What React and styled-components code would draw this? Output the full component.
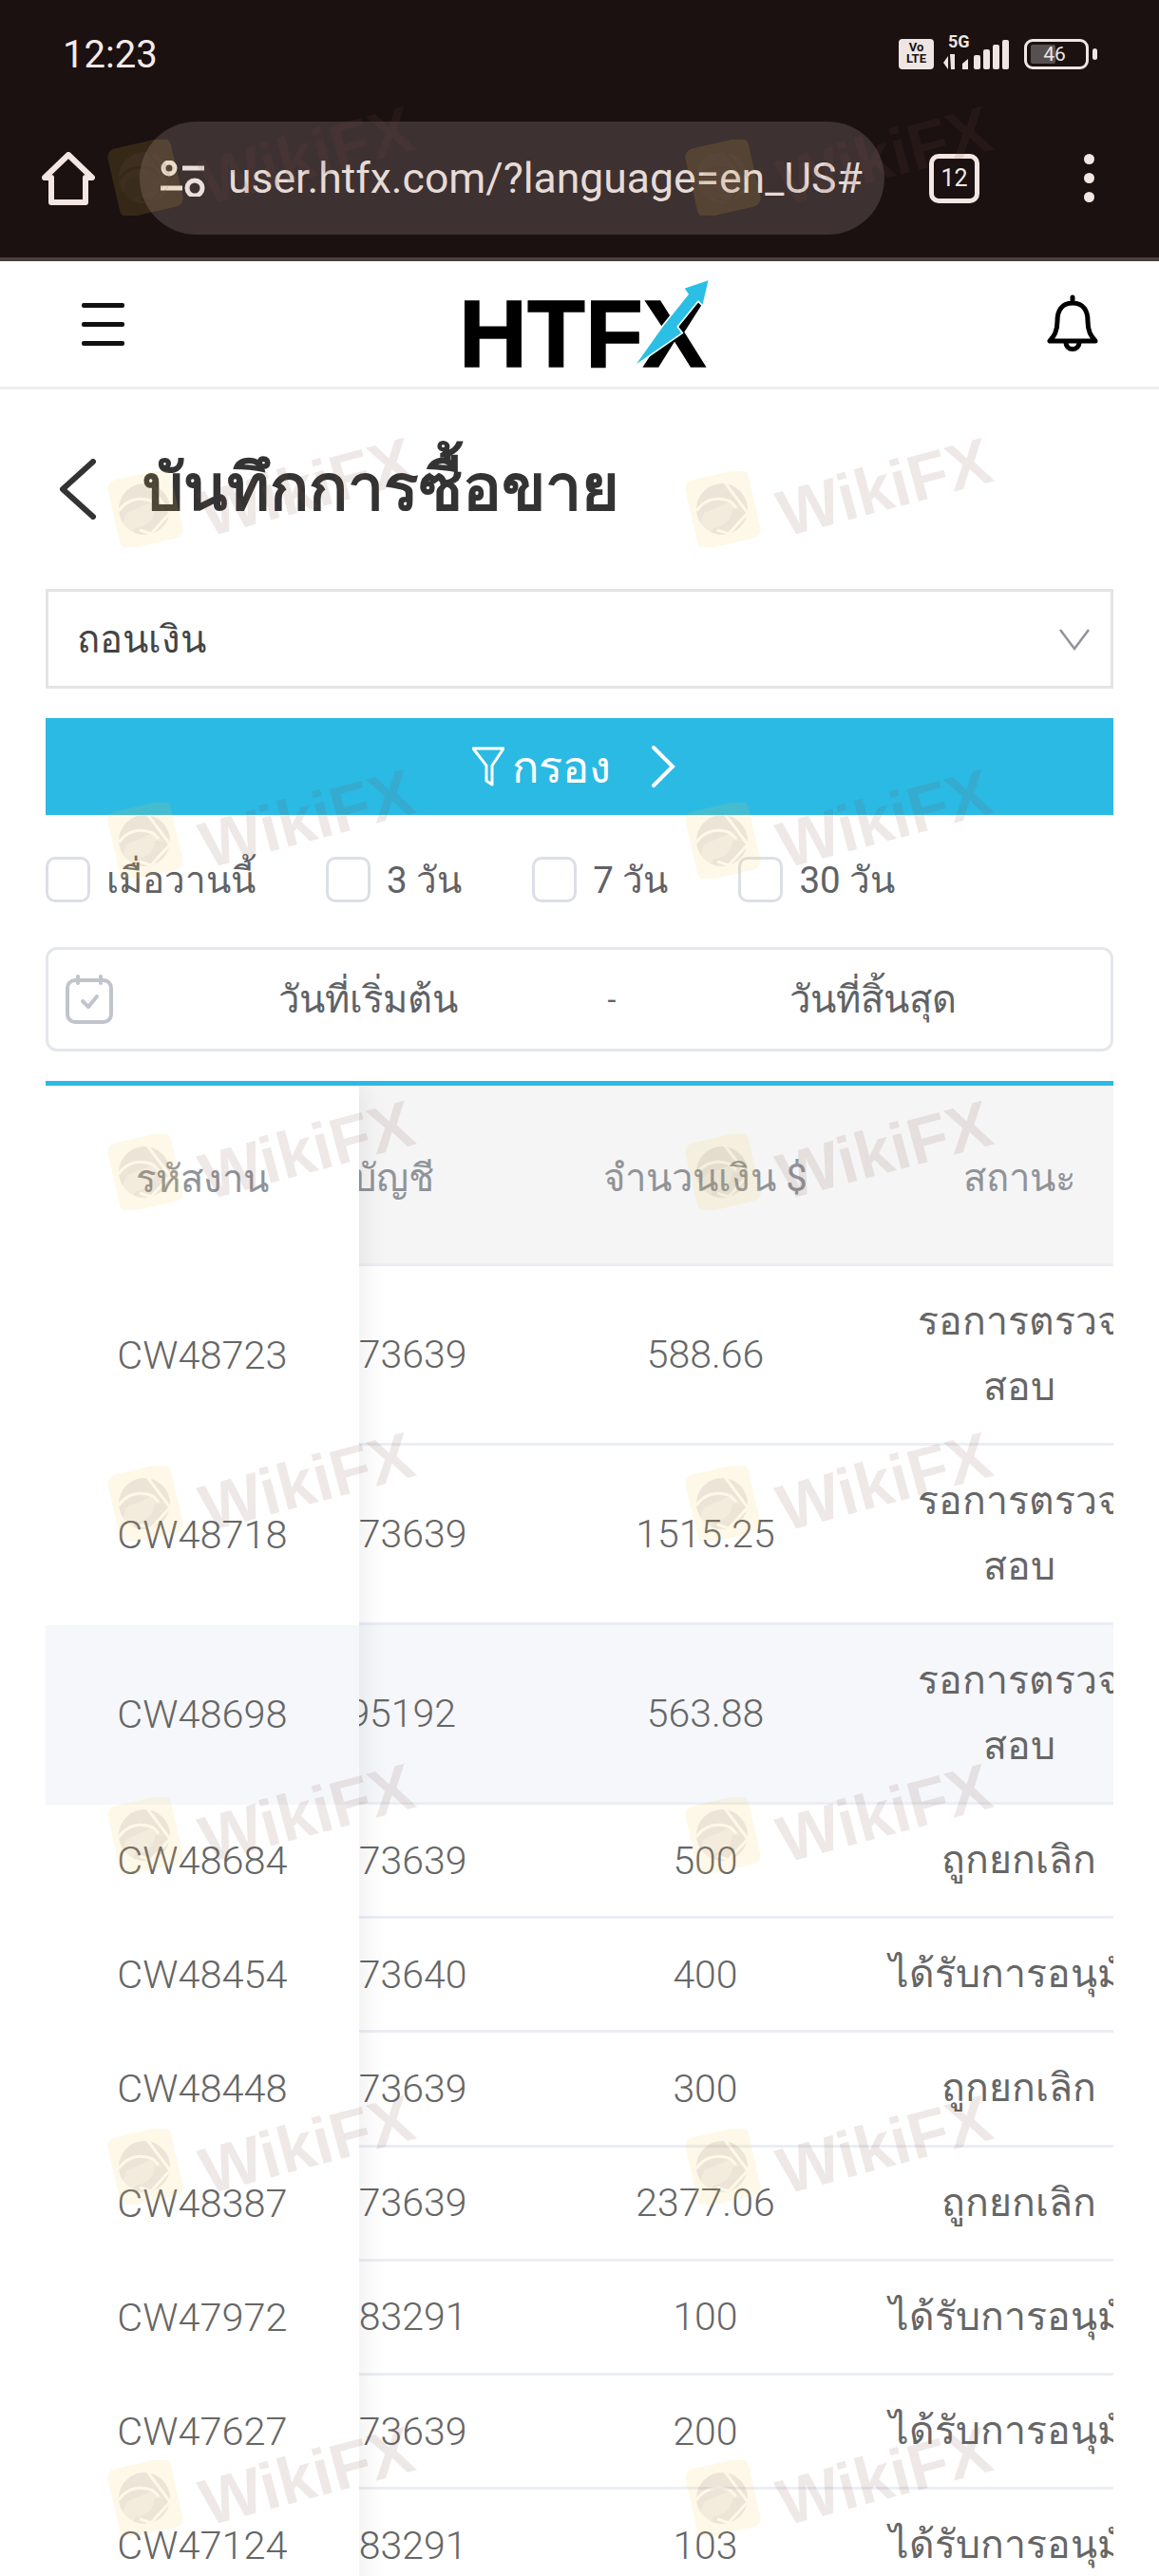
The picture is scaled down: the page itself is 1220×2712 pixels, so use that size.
import React from 'react';
import styled, { createGlobalStyle } from 'styled-components';

const GlobalStyle = createGlobalStyle`
    html, body {
        margin: 0;
        padding: 0;
        width: 1220px;
        height: 2712px;
        overflow: hidden;
        background: #fff;
    }
    body {
        font-family: Roboto, "Noto Sans", "Liberation Sans", "DejaVu Sans", sans-serif;
    }
    * {
        box-sizing: border-box;
    }
`;

const rows = [
    { id: 'CW48723', account: '10373639', amount: '588.66', status: ['รอการตรวจ', 'สอบ'] },
    { id: 'CW48718', account: '10373639', amount: '1515.25', status: ['รอการตรวจ', 'สอบ'] },
    { id: 'CW48698', account: '1095192', amount: '563.88', status: ['รอการตรวจ', 'สอบ'], active: true },
    { id: 'CW48684', account: '10373639', amount: '500', status: ['ถูกยกเลิก'] },
    { id: 'CW48454', account: '10373640', amount: '400', status: ['ได้รับการอนุมัติ'] },
    { id: 'CW48448', account: '10373639', amount: '300', status: ['ถูกยกเลิก'] },
    { id: 'CW48387', account: '10373639', amount: '2377.06', status: ['ถูกยกเลิก'] },
    { id: 'CW47972', account: '10383291', amount: '100', status: ['ได้รับการอนุมัติ'] },
    { id: 'CW47627', account: '10373639', amount: '200', status: ['ได้รับการอนุมัติ'] },
    { id: 'CW47124', account: '10383291', amount: '103', status: ['ได้รับการอนุมัติ'] },
];

const ranges = ['เมื่อวานนี้', '3 วัน', '7 วัน', '30 วัน'];
const marks = Array.from({ length: 16 }, (_, i) => i);

const EagleMark = () => (
    <MarkLogo viewBox="0 0 80 80">
        <mask id="eagle-cut">
            <rect width="80" height="80" fill="#fff" />
            <g fill="none" stroke="#000" strokeWidth="3">
                <path d="M42 12 L66 44 M66 44 L46 66 M46 66 L34 62" />
                <path d="M12 42 C20 30 34 26 48 32 L54 38" />
            </g>
            <path d="M48 32 L58 40 L50 40 C50 50 42 58 30 60 L24 68 L16 56 L20 44Z" fill="#000" opacity="0.35" />
        </mask>
        <rect x="6" y="3" width="68" height="74" rx="9" fill="#f5c850" opacity="0.13" transform="rotate(-13 40 40)" />
        <circle cx="39" cy="40" r="27" fill="#6e5f5a" opacity="0.12" mask="url(#eagle-cut)" />
    </MarkLogo>
);

export default function App() {
    return (
        <Page>
            <GlobalStyle />
            <BrowserChrome>
                <StatusBar>
                    <Clock>12:23</Clock>
                    <StatusIcons>
                        <VolteBadge>Vo<br />LTE</VolteBadge>
                        <Signal>
                            <FiveG>5G</FiveG>
                            <svg width="70" height="32" viewBox="0 0 70 32" fill="#eee6e3">
                                <path d="M0 25 L5 18 V32 Z M7 16 H12 V32 H8 Z" />
                                <path d="M20 26 L26 21 V32 H20Z" />
                                <rect x="32" y="17" width="7" height="15" rx="2" />
                                <rect x="42" y="11" width="7" height="21" rx="2" />
                                <rect x="52" y="6" width="7" height="26" rx="2" />
                                <rect x="62" y="1" width="7" height="31" rx="2" />
                            </svg>
                        </Signal>
                        <Battery>
                            <BatteryLevel />
                            <BatteryText>46</BatteryText>
                            <BatteryNub />
                        </Battery>
                    </StatusIcons>
                </StatusBar>
                <AddressRow>
                    <svg width="56" height="56" viewBox="0 0 56 56" fill="none" stroke="#f3e6e3" strokeWidth="6" strokeLinejoin="round">
                        <path d="M3 27 L28 3 L53 27 H46 V53 H10 V27 Z" />
                    </svg>
                    <AddressPill>
                        <svg width="48" height="38" viewBox="0 0 48 38" fill="none" stroke="#eadfdb" strokeWidth="5">
                            <circle cx="10" cy="8" r="6" />
                            <path d="M24 8 H47 M1 29 H24" />
                            <circle cx="37" cy="29" r="8" />
                        </svg>
                        <UrlText>user.htfx.com/?language=en_US#</UrlText>
                    </AddressPill>
                    <TabCount>12</TabCount>
                    <MoreDots>
                        <i /><i /><i />
                    </MoreDots>
                </AddressRow>
            </BrowserChrome>

            <Header>
                <Burger>
                    <i /><i /><i />
                </Burger>
                <Logo width="270" height="100" viewBox="0 0 810 300">
                    <text x="0" y="285" fontFamily="Liberation Sans" fontWeight="700" fontSize="300" textLength="781" lengthAdjust="spacingAndGlyphs" stroke="#000" strokeWidth="4">HTFX</text>
                    <polygon points="791,9 709,37 723,56 641,159 551,286 706,179 691,159 756,79 771,94" fill="#2bbfe6" stroke="#fff" strokeWidth="5" />
                </Logo>
                <svg width="54" height="62" viewBox="0 0 54 62" fill="none" stroke="#000" strokeWidth="5" strokeLinejoin="round" strokeLinecap="round">
                    <path d="M27 3 V9 M27 9 C15 9 11 18 11 28 C11 40 7 44 3 49 H51 C47 44 43 40 43 28 C43 18 39 9 27 9Z" />
                    <path d="M20 50 C20 60 34 60 34 50" />
                </svg>
            </Header>

            <Content>
                <TitleRow>
                    <svg width="40" height="64" viewBox="0 0 40 64" fill="none" stroke="#333" strokeWidth="6" strokeLinecap="round" strokeLinejoin="round">
                        <path d="M36 3 L4 32 L36 61" />
                    </svg>
                    <Title>บันทึกการซื้อขาย</Title>
                </TitleRow>

                <SelectBox>
                    ถอนเงิน
                    <svg width="32" height="24" viewBox="0 0 32 24" fill="none" stroke="#909399" strokeWidth="2.5">
                        <path d="M1 2 L16 22 L31 2" />
                    </svg>
                </SelectBox>

                <FilterButton>
                    <svg width="34" height="42" viewBox="0 0 34 42" fill="none" stroke="#fff" strokeWidth="3" strokeLinejoin="round">
                        <path d="M1 2 H33 L21 20 V40 L15 36 V20 Z" />
                    </svg>
                    <span>กรอง</span>
                    <ButtonArrow width="26" height="44" viewBox="0 0 26 44" fill="none" stroke="#fff" strokeWidth="4" strokeLinecap="round">
                        <path d="M3 2 L23 22 L3 42" />
                    </ButtonArrow>
                </FilterButton>

                <RangeRow>
                    {ranges.map(label => (
                        <RangeItem key={label}>
                            <RangeBox />
                            {label}
                        </RangeItem>
                    ))}
                </RangeRow>

                <DateBox>
                    <svg width="50" height="52" viewBox="0 0 50 52" fill="none" stroke="#c0c4cc" strokeWidth="4" strokeLinecap="round" strokeLinejoin="round">
                        <rect x="2" y="6" width="46" height="44" rx="8" />
                        <path d="M13 2 V9 M37 2 V9 M18 28 L24 34 L33 23" />
                    </svg>
                    <DateStart>วันที่เริ่มต้น</DateStart>
                    <DateDash>-</DateDash>
                    <DateEnd>วันที่สิ้นสุด</DateEnd>
                </DateBox>

                <TableWrap>
                    <HeadRow>
                        <span />
                        <AccountHead>บัญชี</AccountHead>
                        <HeadCell>จำนวนเงิน $</HeadCell>
                        <HeadCell>สถานะ</HeadCell>
                    </HeadRow>
                    {rows.map(row => (
                        <BodyRow key={row.id} $tall={row.status.length > 1} $active={row.active}>
                            <span />
                            <AccountCell>{row.account}</AccountCell>
                            <BodyCell>{row.amount}</BodyCell>
                            <StatusCell>
                                {row.status.map(line => <div key={line}>{line}</div>)}
                            </StatusCell>
                        </BodyRow>
                    ))}
                    <FixedColumn>
                        <FixedHead>รหัสงาน</FixedHead>
                        {rows.map(row => (
                            <FixedCell key={row.id} $tall={row.status.length > 1} $active={row.active}>
                                {row.id}
                            </FixedCell>
                        ))}
                    </FixedColumn>
                </TableWrap>
            </Content>

            <Watermarks>
                {marks.map(i => (
                    <Mark key={i}>
                        <EagleMark />
                        <MarkText>WikiFX</MarkText>
                    </Mark>
                ))}
            </Watermarks>
        </Page>
    );
}

const Page = styled.div`
    position: relative;
    width: 1220px;
    height: 2712px;
    overflow: hidden;
    background: #fff;
`;

const BrowserChrome = styled.div`
    height: 275px;
    background: #1a1110;
    border-bottom: 4px solid #4a3f3f;
`;

const StatusBar = styled.div`
    display: flex;
    align-items: center;
    justify-content: space-between;
    height: 128px;
    padding: 0 74px 14px 66px;
`;

const Clock = styled.div`
    color: #f4ebe8;
    font-size: 40px;
`;

const StatusIcons = styled.div`
    display: flex;
    align-items: flex-end;
    gap: 10px;
`;

const VolteBadge = styled.div`
    width: 37px;
    height: 32px;
    padding-top: 3px;
    border-radius: 4px;
    background: #eee6e3;
    color: #1a1110;
    font-size: 13px;
    font-weight: 700;
    line-height: 12px;
    text-align: center;
`;

const Signal = styled.div`
    position: relative;
    display: flex;
`;

const FiveG = styled.span`
    position: absolute;
    left: 5px;
    top: -6px;
    color: #eee6e3;
    font-size: 18px;
    font-weight: 700;
    line-height: 18px;
`;

const Battery = styled.div`
    position: relative;
    width: 68px;
    height: 32px;
    margin-left: 5px;
    border: 3px solid #eee6e3;
    border-radius: 9px;
`;

const BatteryLevel = styled.div`
    position: absolute;
    left: 4px;
    top: 3px;
    bottom: 3px;
    width: 26px;
    border-radius: 2px;
    background: #575050;
`;

const BatteryText = styled.span`
    position: absolute;
    inset: 0;
    padding-right: 4px;
    color: #eee6e3;
    font-size: 21px;
    line-height: 27px;
    text-align: center;
`;

const BatteryNub = styled.div`
    position: absolute;
    right: -12px;
    top: 7px;
    width: 5px;
    height: 12px;
    border-radius: 3px;
    background: #eee6e3;
`;

const AddressRow = styled.div`
    display: flex;
    align-items: center;
    height: 119px;
    padding-left: 44px;
`;

const AddressPill = styled.div`
    display: flex;
    align-items: center;
    gap: 24px;
    width: 784px;
    height: 119px;
    margin-left: 47px;
    padding-left: 21px;
    border-radius: 60px;
    background: #3d3131;
`;

const UrlText = styled.span`
    color: #e6dbd7;
    font-size: 44.5px;
    white-space: nowrap;
`;

const TabCount = styled.div`
    display: flex;
    align-items: center;
    justify-content: center;
    width: 53px;
    height: 52px;
    margin-left: 47px;
    border: 5px solid #f3e6e3;
    border-radius: 10px;
    color: #f3e6e3;
    font-size: 25px;
`;

const MoreDots = styled.div`
    display: flex;
    flex-direction: column;
    gap: 9px;
    margin-left: 110px;

    i {
        display: block;
        width: 11px;
        height: 11px;
        border-radius: 50%;
        background: #f3e6e3;
    }
`;

const Header = styled.div`
    display: flex;
    align-items: center;
    justify-content: space-between;
    height: 135px;
    padding: 0 64px 0 86px;
    border-bottom: 3px solid #eee;
`;

const Logo = styled.svg`
    margin-left: 2px;
`;

const Burger = styled.div`
    display: flex;
    flex-direction: column;
    gap: 15px;
    width: 45px;

    i {
        display: block;
        height: 5px;
        border-radius: 2px;
        background: #111;
    }
`;

const Content = styled.div`
    padding: 0 48px;
`;

const TitleRow = styled.div`
    display: flex;
    align-items: center;
    gap: 48px;
    height: 210px;
    padding-left: 14px;
`;

const Title = styled.h1`
    margin: 0 0 5px;
    color: #333;
    font-size: 68px;
    font-weight: 700;
    white-space: nowrap;
`;

const SelectBox = styled.div`
    display: flex;
    align-items: center;
    justify-content: space-between;
    height: 105px;
    padding: 0 22px 0 30px;
    border: 3px solid #e4e4e4;
    color: #444;
    font-size: 40px;
`;

const FilterButton = styled.div`
    display: flex;
    align-items: center;
    justify-content: center;
    gap: 8px;
    height: 102px;
    margin-top: 31px;
    padding-right: 12px;
    background: #2bbae4;
    color: #fff;
    font-size: 47px;
`;

const ButtonArrow = styled.svg`
    margin-left: 34px;
`;

const RangeRow = styled.div`
    display: flex;
    gap: 74px;
    height: 48px;
    margin-top: 44px;
`;

const RangeItem = styled.div`
    display: flex;
    align-items: center;
    gap: 17px;
    color: #606266;
    font-size: 38.5px;
    white-space: nowrap;
`;

const RangeBox = styled.span`
    width: 47px;
    height: 48px;
    border: 3px solid #dcdfe6;
    border-radius: 10px;
    background: #fff;
`;

const DateBox = styled.div`
    display: flex;
    align-items: center;
    height: 110px;
    margin-top: 47px;
    padding-left: 18px;
    border: 3px solid #e4e7ed;
    border-radius: 12px;
`;

const DateStart = styled.div`
    width: 490px;
    margin-left: 23px;
    color: #606266;
    font-size: 40px;
    text-align: center;
`;

const DateEnd = styled.div`
    flex: 1;
    margin-left: 12px;
    color: #606266;
    font-size: 40px;
    text-align: center;
`;

const DateDash = styled.div`
    width: 24px;
    color: #606266;
    font-size: 32px;
    text-align: center;
`;

const TableWrap = styled.div`
    position: relative;
    height: 1600px;
    margin-top: 31px;
    overflow: hidden;
    border-top: 5px solid #2bbae4;
`;

const columns = '199px 313px 365px 295px';
const tallRow = '189px';
const shortRow = '120.2px';

const HeadRow = styled.div`
    display: grid;
    grid-template-columns: ${columns};
    align-items: center;
    width: 1172px;
    height: 190px;
    padding-top: 6px;
    border-bottom: 3px solid #ebeef5;
    background: #f5f5f5;
`;

const HeadCell = styled.div`
    color: #909399;
    font-size: 40px;
    text-align: center;
    white-space: nowrap;
`;

const AccountHead = styled(HeadCell)`
    padding-left: 20px;
`;

const BodyRow = styled.div`
    display: grid;
    grid-template-columns: ${columns};
    align-items: center;
    width: 1172px;
    height: ${props => (props.$tall ? tallRow : shortRow)};
    border-bottom: 3px solid #ebeef5;
    background: ${props => (props.$active ? '#f5f7fb' : '#fff')};
`;

const BodyCell = styled.div`
    color: #666;
    font-size: 41px;
    font-weight: 300;
    text-align: center;
`;

const AccountCell = styled(BodyCell)`
    padding-right: 6px;
`;

const StatusCell = styled.div`
    color: #666;
    font-size: 41px;
    line-height: 69px;
    text-align: center;
    white-space: nowrap;
`;

const FixedColumn = styled.div`
    position: absolute;
    left: 0;
    top: 0;
    width: 330px;
    background: #fff;
    box-shadow: 8px 0 24px rgba(0, 0, 0, 0.06);
`;

const FixedHead = styled.div`
    display: flex;
    align-items: center;
    justify-content: center;
    height: 190px;
    padding-top: 6px;
    color: #909399;
    font-size: 40px;
`;

const FixedCell = styled.div`
    display: flex;
    align-items: center;
    justify-content: center;
    height: ${props => (props.$tall ? tallRow : shortRow)};
    padding-bottom: 3px;
    background: ${props => (props.$active ? '#f5f7fb' : '#fff')};
    color: #666;
    font-size: 41.5px;
    font-weight: 300;
`;

const Watermarks = styled.div`
    position: absolute;
    left: 113px;
    top: 147px;
    display: grid;
    grid-template-columns: repeat(2, 608px);
    grid-auto-rows: 349px;
    pointer-events: none;
`;

const Mark = styled.div`
    display: flex;
    align-items: flex-start;
    gap: 20px;
`;

const MarkLogo = styled.svg`
    width: 80px;
    height: 80px;
`;

const MarkText = styled.span`
    color: rgba(125, 80, 70, 0.13);
    font-family: "Liberation Sans", sans-serif;
    font-size: 69px;
    font-weight: 700;
    line-height: 70px;
    transform: rotate(-15deg) translateY(-18px);
`;
